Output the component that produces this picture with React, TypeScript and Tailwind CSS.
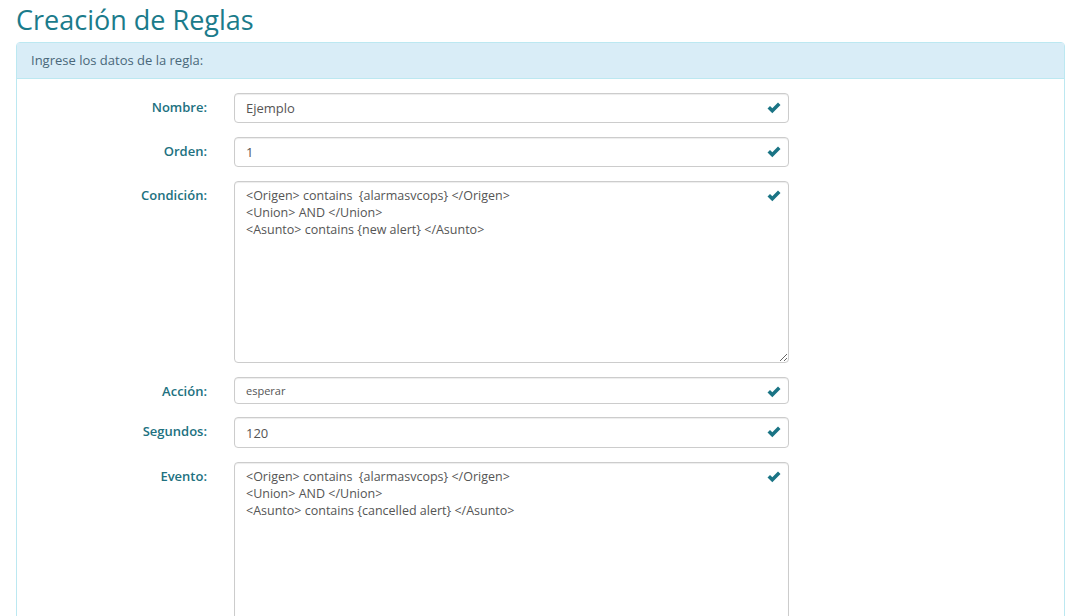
const condicion = `<Origen> contains  {alarmasvcops} </Origen>
<Union> AND </Union>
<Asunto> contains {new alert} </Asunto>`;

const evento = `<Origen> contains  {alarmasvcops} </Origen>
<Union> AND </Union>
<Asunto> contains {cancelled alert} </Asunto>`;

function Check() {
  return (
    <svg
      className="absolute right-[8px] top-[9px] pointer-events-none"
      width="14"
      height="12"
      viewBox="0 0 14 12"
    >
      <path d="M0.5 6.5 L3 4 L5.3 6.3 L11 0.6 L13.5 3 L5.3 11.2 Z" fill="#1a7485" />
    </svg>
  );
}

function Row({ label, children }: { label: string; children: React.ReactNode }) {
  return (
    <div className="flex items-start">
      <label className="w-[190px] shrink-0 pt-[6px] text-right text-[13px] leading-[16px] font-semibold text-[#21717f]">
        {label}
      </label>
      <div className="relative ml-[27px] w-[555px]">
        {children}
        <Check />
      </div>
    </div>
  );
}

const inputCls =
  "block w-full rounded border border-[#cccccc] bg-white pl-[11px] pr-8 text-[#555555] outline-none shadow-[inset_0_1px_1px_rgba(0,0,0,0.075)]";

export default function App() {
  return (
    <div className="min-h-screen bg-white pl-4 pr-[15px] font-['Open_Sans',sans-serif]">
      <h1 className="pt-[2px] mb-[4px] text-[27px] leading-[36px] font-normal text-[#1b7b8b]">
        Creación de Reglas
      </h1>
      <div className="rounded-t border border-[#bce8f1] bg-white">
        <div className="h-[36px] border-b border-[#bce8f1] bg-[#d9edf7] px-[14px] text-[13px] leading-[35px] text-[#49687a]">
          Ingrese los datos de la regla:
        </div>
        <form className="flex flex-col gap-[14px] pt-[14px]">
          <Row label="Nombre:">
            <input className={`${inputCls} h-[30px] text-[13px]`} defaultValue="Ejemplo" readOnly />
          </Row>
          <Row label="Orden:">
            <input className={`${inputCls} h-[30px] text-[13px]`} defaultValue="1" readOnly />
          </Row>
          <Row label="Condición:">
            <textarea
              className={`${inputCls} h-[182px] resize-y pt-[5px] text-[12.5px] leading-[17px]`}
              defaultValue={condicion}
              readOnly
            />
          </Row>
          <Row label="Acción:">
            <input className={`${inputCls} h-[27px] text-[11px]`} defaultValue="esperar" readOnly />
          </Row>
          <div className="-mt-px">
            <Row label="Segundos:">
              <input className={`${inputCls} h-[31px] text-[13px]`} defaultValue="120" readOnly />
            </Row>
          </div>
          <Row label="Evento:">
            <textarea
              className={`${inputCls} h-[182px] resize-y pt-[5px] text-[12.5px] leading-[17px]`}
              defaultValue={evento}
              readOnly
            />
          </Row>
        </form>
      </div>
    </div>
  );
}
